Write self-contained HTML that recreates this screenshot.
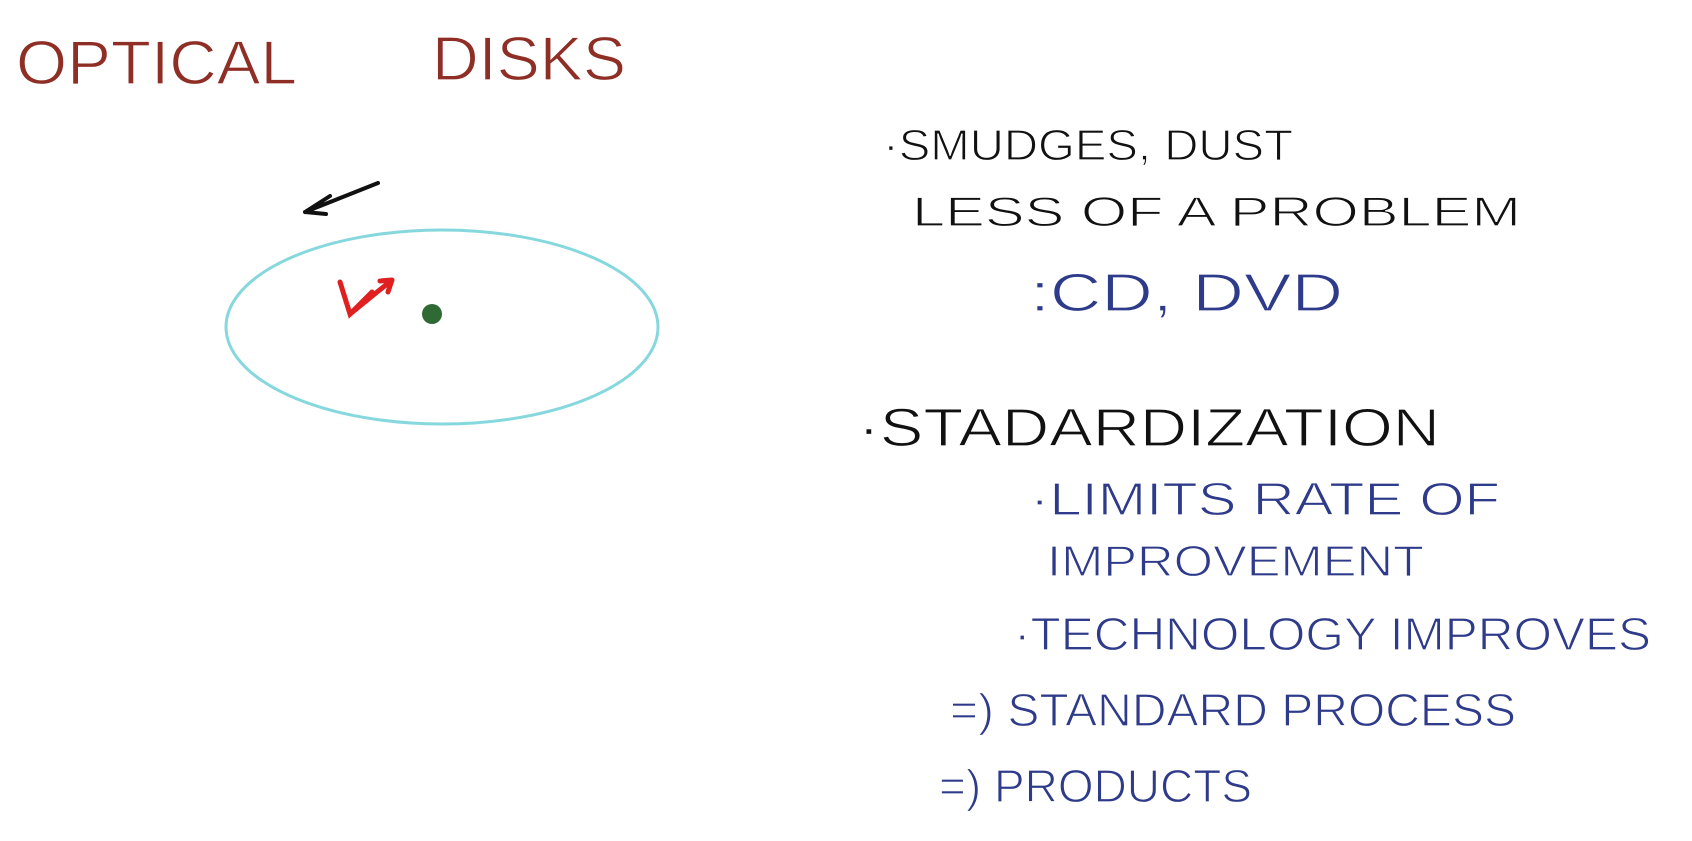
<!DOCTYPE html>
<html><head><meta charset="utf-8"><style>
html,body{margin:0;padding:0;background:#fff;width:1692px;height:841px;overflow:hidden}
svg{display:block}
text{font-family:"Liberation Sans",sans-serif;stroke:#fff;stroke-width:1.2}
</style></head><body>
<svg width="1692" height="841" viewBox="0 0 1692 841" xmlns="http://www.w3.org/2000/svg">
<rect width="1692" height="841" fill="#fff"/>
<g fill="#8e2e25">
<text x="16" y="84" font-size="62" textLength="281" lengthAdjust="spacingAndGlyphs">OPTICAL</text>
<text x="432" y="80" font-size="62" textLength="194" lengthAdjust="spacingAndGlyphs">DISKS</text>
</g>
<path d="M378 183 L305 212 M305 212 L330 196 M305 212 L326 214" stroke="#111" stroke-width="4" fill="none" stroke-linecap="round"/>
<ellipse cx="442" cy="327" rx="216" ry="97" fill="none" stroke="#86d8de" stroke-width="3"/>
<path d="M340 282 L350 314 L372 292 M350 314 L392 280 M392 280 L380 281 M392 280 L388 292" stroke="#e02020" stroke-width="5" fill="none" stroke-linecap="round"/>
<circle cx="432" cy="314" r="10" fill="#2f6a34"/>
<g fill="#111">
<text x="883" y="160" font-size="44" textLength="410" lengthAdjust="spacingAndGlyphs">·SMUDGES, DUST</text>
<text x="912" y="226" font-size="42" textLength="609" lengthAdjust="spacingAndGlyphs">LESS OF A PROBLEM</text>
<text x="858" y="446" font-size="54" textLength="582" lengthAdjust="spacingAndGlyphs">·STADARDIZATION</text>
</g>
<g fill="#2e3a8a">
<text x="1030" y="311" font-size="54" textLength="313" lengthAdjust="spacingAndGlyphs">:CD, DVD</text>
<text x="1030" y="515" font-size="46" textLength="470" lengthAdjust="spacingAndGlyphs">·LIMITS RATE OF</text>
<text x="1047" y="576" font-size="44" textLength="377" lengthAdjust="spacingAndGlyphs">IMPROVEMENT</text>
<text x="1014" y="650" font-size="46" textLength="637" lengthAdjust="spacingAndGlyphs">·TECHNOLOGY IMPROVES</text>
<text x="950" y="726" font-size="46" textLength="566" lengthAdjust="spacingAndGlyphs">=) STANDARD PROCESS</text>
<text x="939" y="802" font-size="46" textLength="313" lengthAdjust="spacingAndGlyphs">=) PRODUCTS</text>
</g>
</svg>
</body></html>
